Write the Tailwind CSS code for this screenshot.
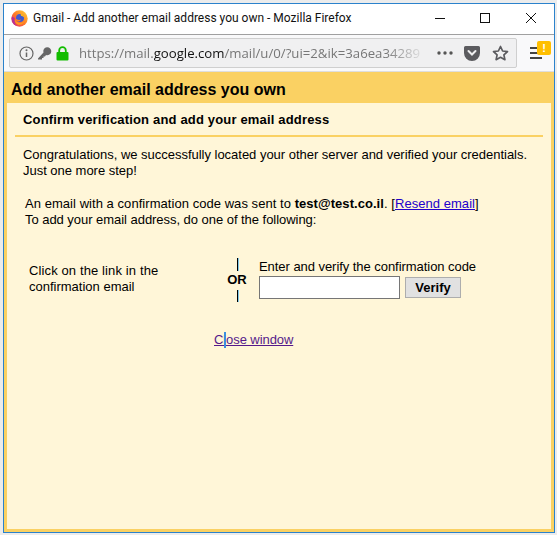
<!DOCTYPE html>
<html lang="en">
<head>
  <meta charset="UTF-8">
  <title>Add another email address you own</title>
  <script src="https://cdn.jsdelivr.net/npm/@tailwindcss/browser@4"></script>
</head>
<body class="bg-[#ececec] font-['Liberation_Sans',Arial,sans-serif] text-black overflow-hidden">
  <div class="w-[557px] h-[535px] pt-[3px] pl-[3px] pr-[2px] pb-[2px]">
    <!-- Window frame -->
    <div class="w-[552px] h-[530px] border border-[#2b82cc] bg-white flex flex-col">
      <!-- Title bar -->
      <div class="h-[30px] shrink-0 flex items-center pl-[7px] pb-[2px] bg-white">
        <svg class="w-[17px] h-[17px] shrink-0" viewBox="0 0 17 17">
          <defs>
            <linearGradient id="fox" x1="1" y1="0" x2="0" y2="1">
              <stop offset="0" stop-color="#ffd83a"/>
              <stop offset=".5" stop-color="#ff7a26"/>
              <stop offset="1" stop-color="#e0266e"/>
            </linearGradient>
          </defs>
          <circle cx="8.500" cy="8.500" r="8.200" fill="url(#fox)"/>
          <path d="M.8 6.500C.2 10.500 2 14.500 5.500 16 3.500 13.500 3 10.500 3.800 8Z" fill="#b5309a"/>
          <circle cx="9" cy="8" r="4" fill="#3f5ad0"/>
          <path d="M9.500 3.200c2.200.4 3.800 2.200 4 4.500-1-1.200-2.300-1.800-3.500-1.800Z" fill="#ffb21f"/>
          <path d="M4 9c.6 2.600 3.200 4.300 6 3.800 1.700-.3 3-1.200 3.800-2.500-.5 2.500-2.800 4.500-5.500 4.500C5.500 14.800 3.500 12 4 9Z" fill="#ff9a1f"/>
          <path d="M4.500 8.500c1.500 1.300 3.500 1.800 5.500 1-.5 1.500-2.200 2.300-3.500 1.800C5.300 11 4.600 9.800 4.500 8.500Z" fill="#ff7a26"/>
        </svg>
        <span class="ml-[5px] text-[12px] font-['Roboto',sans-serif] leading-none text-[#111]">Gmail - Add another email address you own - Mozilla Firefox</span>
        <div class="ml-auto flex items-center">
          <svg class="w-[46px] h-[28px]" viewBox="0 0 46 28"><path d="M19 14.500h10" stroke="#111" fill="none"/></svg>
          <svg class="w-[46px] h-[28px]" viewBox="0 0 46 28"><rect x="18.500" y="9.500" width="9" height="9" stroke="#111" fill="none"/></svg>
          <svg class="w-[46px] h-[28px]" viewBox="0 0 46 28"><path d="M18 9l10 10M28 9l-10 10" stroke="#111" fill="none"/></svg>
        </div>
      </div>
      <div class="h-px shrink-0 bg-[#a0a0a0]"></div>

      <!-- Toolbar -->
      <div class="h-[37px] shrink-0 flex items-center bg-[#f9f9fa] border-b border-[#dedede] pl-[5px]">
        <div class="w-[508px] h-[30px] shrink-0 flex items-center rounded-[2px] border border-[#cfcfcf] bg-[#f0f0f1] overflow-hidden">
          <svg class="ml-[9px] w-[15px] h-[15px] shrink-0" viewBox="0 0 15 15">
            <circle cx="7.500" cy="7.500" r="6.500" fill="none" stroke="#666" stroke-width="1.200"/>
            <path d="M7.500 6.500v4.500" stroke="#666" stroke-width="1.500"/>
            <circle cx="7.500" cy="4.300" r="1" fill="#666"/>
          </svg>
          <svg class="ml-[3px] w-[15px] h-[15px] shrink-0" viewBox="0 0 15 15">
            <path d="M1 12.500 6.500 6.500a4 4 0 1 1 2.500 2.500L8 10.500H6.500V12H5v1.500H1Z" fill="#666"/>
          </svg>
          <svg class="ml-[4px] w-[13px] h-[15px] shrink-0" viewBox="0 0 13 15">
            <path d="M3.200 6.500V4.500a3.300 3.300 0 0 1 6.600 0v2" fill="none" stroke="#12bc00" stroke-width="1.800"/>
            <rect x="0.500" y="6" width="12" height="8.500" rx="1" fill="#12bc00"/>
          </svg>
          <div class="ml-[10px] w-[348px] shrink-0 overflow-hidden whitespace-nowrap font-['Open_Sans',sans-serif] text-[13.200px] leading-[18px] text-[#777] [mask-image:linear-gradient(to_right,black_88%,transparent)]">https://mail.<span class="text-[#111]">google.com</span>/mail/u/0/?ui=2&amp;ik=3a6ea34289</div>
          <svg class="ml-[10px] w-[16px] h-[4px] shrink-0" viewBox="0 0 16 4">
            <circle cx="2" cy="2" r="1.700" fill="#555"/><circle cx="8" cy="2" r="1.700" fill="#555"/><circle cx="14" cy="2" r="1.700" fill="#555"/>
          </svg>
          <svg class="ml-[11px] w-[16px] h-[15px] shrink-0" viewBox="0 0 16 15">
            <path d="M1.500 0h13A1.500 1.500 0 0 1 16 1.500V7A8 8 0 0 1 0 7V1.500A1.500 1.500 0 0 1 1.500 0Z" fill="#5b5b5f"/>
            <path d="M4.500 5 8 8.500 11.500 5" fill="none" stroke="#f0f0f1" stroke-width="2" stroke-linecap="round"/>
          </svg>
          <svg class="ml-[12px] w-[17px] h-[16px] shrink-0" viewBox="0 0 17 16">
            <path d="M8.500 1.500 10.600 6l4.900.6-3.600 3.300 1 4.800-4.400-2.400-4.400 2.400 1-4.800L1.500 6.600 6.400 6Z" fill="none" stroke="#5b5b5f" stroke-width="1.700" stroke-linejoin="round"/>
          </svg>
        </div>
        <div class="relative ml-[13px] w-[12px] h-[12px] flex flex-col justify-between">
          <div class="h-[2px] bg-[#444]"></div>
          <div class="h-[2px] bg-[#444]"></div>
          <div class="h-[2px] bg-[#444]"></div>
          <div class="absolute top-[-6px] left-[7px] w-[14px] h-[14px] rounded-[2px] bg-[#ffbf00] text-white text-[11px] leading-[14px] font-bold text-center">!</div>
        </div>
      </div>

      <!-- Popup content -->
      <div class="h-[460px] shrink-0 bg-[#fad163] px-[3px] pb-[3px] flex flex-col">
        <h1 class="h-[31px] shrink-0 pl-[4px] pt-[9px] text-[16px] leading-[18px] font-bold">Add another email address you own</h1>
        <div class="flex-1 bg-[#fff6d8] pt-[8px]">
          <h2 class="pl-[16px] pt-px text-[13px] leading-[16px] font-bold tracking-[0.17px]">Confirm verification and add your email address</h2>
          <div class="mt-[7px] ml-[8px] w-[528px] h-[2px] bg-[#fad163]"></div>
          <p class="mt-[10px] pl-[16px] text-[13px] leading-[16px] tracking-[-0.02px]">Congratulations, we successfully located your other server and verified your credentials.<br>Just one more step!</p>
          <p class="mt-[17px] pl-[18px] text-[13px] leading-[16px]"><span class="tracking-[0.05px]">An email with a confirmation code was sent to <b>test@test.co.il</b>. [<a href="#" class="text-[#2200cc] underline">Resend email</a>]</span><br><span class="tracking-[-0.04px]">To add your email address, do one of the following:</span></p>
          <div class="mt-[31px] flex">
            <p class="ml-[22px] mt-[4px] w-[199px] text-[13px] leading-[16px]"><span class="tracking-[0.12px]">Click on the link in the</span><br>confirmation email</p>
            <div class="w-[18px] flex flex-col items-center">
              <div class="mt-[-1px] ml-px w-[2px] h-[13px] bg-black border-r border-[#7fc8e8]"></div>
              <span class="mt-px text-[13px] leading-[16px] font-bold">OR</span>
              <div class="mt-[2px] ml-px w-[2px] h-[12px] bg-black border-r border-[#7fc8e8]"></div>
            </div>
            <div class="ml-[13px]">
              <div class="text-[13px] leading-[16px] tracking-[-0.05px]">Enter and verify the confirmation code</div>
              <div class="mt-px flex items-center">
                <input type="text" class="w-[141px] h-[23px] bg-white border border-[#767676]">
                <button class="ml-[5px] w-[56px] h-[21px] bg-[#e1e1e1] border border-[#adadad] text-[13px] font-bold leading-none">Verify</button>
              </div>
            </div>
          </div>
          <div class="mt-[30px] ml-[207px] text-[13px] leading-[16px] tracking-[-0.08px]">
            <a href="#" class="relative text-[#551a8b] underline">Close window<span class="absolute left-[10px] top-0 w-[2px] h-[16px] bg-[#3b8ee0]"></span></a>
          </div>
        </div>
      </div>
    </div>
  </div>
</body>
</html>
